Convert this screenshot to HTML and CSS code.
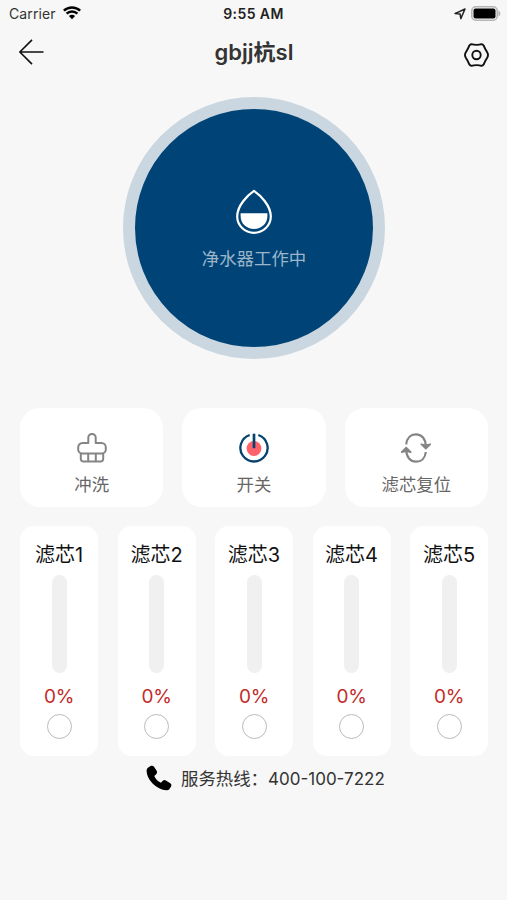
FILE: index.html
```html
<!DOCTYPE html>
<html lang="zh-CN">
<head>
<meta charset="utf-8">
<title>gbjj杭sl</title>
<link rel="stylesheet" href="styles.css">
</head>
<body>
<div class="status">
  <div class="status-left"><span class="carrier">Carrier</span>
    <svg class="wifi" width="18" height="14" viewBox="0 0 18 14"><path d="M.8 4.700C5.400.3 12.600.3 17.200 4.700M3.600 7.700c3-2.900 7.800-2.900 10.800 0" fill="none" stroke="#000" stroke-width="2.500"/><path d="M5.900 10.100c1.700-1.700 4.500-1.700 6.200 0L9 13.300Z"/></svg>
  </div>
  <div class="time">9:55 AM</div>
  <div class="status-right">
    <svg width="12" height="12" viewBox="0 0 12 12"><path d="M1 5.600 11 1 6.800 10.600 6.100 6.100Z" fill="none" stroke="#222" stroke-width="1.500" stroke-linejoin="round"/></svg>
    <svg width="30" height="15" viewBox="0 0 30 15"><rect x=".8" y=".8" width="25.400" height="13.400" rx="4" fill="#f7f7f7" stroke="#b5b5b5" stroke-width="1.600"/><rect x="2.500" y="2.500" width="22" height="10" rx="2"/><path d="M27.400 4.500c2.600 1 2.600 5 0 6Z" fill="#b5b5b5"/></svg>
  </div>
</div>
<header class="nav">
  <svg width="25" height="26" viewBox="0 0 25 26"><path d="M13 .9.9 13 13 25.100M1 13h23.500" fill="none" stroke="#111" stroke-width="1.600"/></svg>
  <h1>gbjj杭sl</h1>
  <svg class="gear" width="25" height="24" viewBox="0 0 25 24" fill="none" stroke="#111" stroke-width="1.900" stroke-linejoin="round"><path d="M7.600 1.200Q9.200 1.900 12.500 1.900T17.400 1.200Q18.800 1.100 19.600 2.400 20.800 5.600 23.300 9.600 24.700 12 23.300 14.400 20.800 18.400 19.600 21.600 18.800 22.900 17.400 22.800 15.800 22.100 12.500 22.100T7.600 22.800Q6.200 22.900 5.400 21.600 4.200 18.400 1.700 14.400.3 12 1.700 9.600 4.200 5.600 5.400 2.400 6.200 1.100 7.600 1.200Z"/><circle cx="12.500" cy="12" r="4.200"/></svg>
</header>
<main>
  <section class="dial">
    <svg width="38" height="46" viewBox="0 0 38 46"><path d="M19 1.900C12.500 6.300 2.200 16.500 2.200 27.600a16.800 16.200 0 0 0 33.600 0C35.800 16.500 25.500 6.300 19 1.900Z" fill="none" stroke="#fff" stroke-width="2.200" stroke-linejoin="round"/><path d="M5.600 24.200H32.400V27C32.400 34.500 26.500 39.900 19 39.900S5.600 34.500 5.600 27Z" fill="#fff"/></svg>
    <p>净水器工作中</p>
  </section>
  <section class="actions">
    <div class="card action">
      <svg width="30" height="30" viewBox="0 0 30 30" fill="none" stroke="#858585" stroke-width="2" stroke-linejoin="round"><path d="M11.300 10V4.600a3.700 3.700 0 0 1 7.400 0V10H24.500a4.300 4.300 0 0 1 4.300 4.300V16.500a4 4 0 0 1-4 4H5.200a4 4 0 0 1-4-4V14.300A4.300 4.300 0 0 1 5.500 10ZM3.800 20.500V26a2.500 2.500 0 0 0 2.500 2.500H23.700a2.500 2.500 0 0 0 2.500-2.500V20.500M11.200 20.500v8M18.800 20.500v8"/></svg>
      <span>冲洗</span>
    </div>
    <div class="card action">
      <svg width="30" height="30" viewBox="0 0 30 30"><circle cx="15" cy="15.500" r="7.400" fill="#ff626a"/><path d="M10.700 2A13.600 13.600 0 1 0 19.300 2" fill="none" stroke="#07426f" stroke-width="2.300"/><path d="M15 .7V15.200" stroke="#07426f" stroke-width="2.700"/></svg>
      <span>开关</span>
    </div>
    <div class="card action">
      <svg width="30" height="30" viewBox="0 0 30 30" fill="none" stroke="#858585" stroke-width="2.200"><path d="M5.200 11.300C5.800 5.300 9.700 1.400 15 1.400c5.800 0 9.700 4.500 9.700 11.600V15M24.800 19C24.200 25 20.300 28.700 15 28.700 9.200 28.700 5.300 24.200 5.300 17.100V15.300"/><path d="M20.200 11.200l4.600 1 4.600-1-4.600 4.400ZM.6 19.100l4.600-4.400 4.600 4.400-4.600-1Z" fill="#858585" stroke-width="1.600" stroke-linejoin="round"/></svg>
      <span>滤芯复位</span>
    </div>
  </section>
  <section class="filters">
    <div class="card filter"><h2>滤芯1</h2><div class="track"></div><strong>0%</strong><i class="dot"></i></div>
    <div class="card filter"><h2>滤芯2</h2><div class="track"></div><strong>0%</strong><i class="dot"></i></div>
    <div class="card filter"><h2>滤芯3</h2><div class="track"></div><strong>0%</strong><i class="dot"></i></div>
    <div class="card filter"><h2>滤芯4</h2><div class="track"></div><strong>0%</strong><i class="dot"></i></div>
    <div class="card filter"><h2>滤芯5</h2><div class="track"></div><strong>0%</strong><i class="dot"></i></div>
  </section>
</main>
<footer class="hotline">
  <svg width="26" height="26" viewBox="0 0 26 26"><path d="M2.200 2.500 5 .8Q6.900.2 8 1.800L10.800 6.100Q11.600 7.800 10.200 9.200L8.300 10.900C9.200 13.500 12 16.500 14.900 17.700L16.800 15.800Q18.200 14.500 19.900 15.500L24.300 18.200Q26 19.400 25.200 21.200L23.500 23.900Q22.500 25.300 20.500 25.200C10.800 24.800.6 15 .6 5.500Q.6 3.600 2.200 2.500Z"/></svg>
  <span class="label">服务热线：</span><span class="phone">400-100-7222</span>
</footer>
</body>
</html>
```
FILE: styles.css
```css
* { box-sizing: border-box; margin: 0; padding: 0; }
body { width: 507px; height: 900px; overflow: hidden; background: #f7f7f7; font-family: Inter, "Noto Sans CJK SC", sans-serif; color: #222; }
svg { display: block; flex: none; }
.status { display: grid; grid-template-columns: 1fr auto 1fr; align-items: center; height: 27px; padding: 0 6px 0 9px; }
.status-left { display: flex; align-items: center; gap: 7px; }
.carrier { font-size: 14px; letter-spacing: .1px; color: #333; }
.wifi { margin-bottom: 2px; }
.time { font-size: 14px; font-weight: 600; letter-spacing: .4px; margin-left: -3px; }
.status-right { display: flex; justify-content: flex-end; align-items: center; gap: 5px; }
.nav { display: flex; align-items: center; justify-content: space-between; height: 49px; padding: 0 18px 0 19px; }
.nav h1 { font-size: 22px; line-height: 30px; font-weight: 600; color: #333; }
.gear { margin-top: 7px; }
main { padding: 21px 19px 0 20px; }
.dial { width: 262px; height: 262px; margin: 0 auto; border: 12px solid #cad7e0; border-radius: 50%; background: #004477; display: flex; flex-direction: column; align-items: center; padding-top: 80px; }
.dial p { margin-top: 11px; font-size: 17.400px; line-height: 26px; color: #9bb5ca; }
.actions { display: grid; grid-template-columns: repeat(3, 1fr); gap: 19px; margin-top: 49px; }
.card { background: #fff; display: flex; flex-direction: column; align-items: center; }
.action { height: 99px; border-radius: 20px; padding-top: 25px; }
.action span { margin-top: 9px; font-size: 17.400px; line-height: 26px; color: #666; }
.filters { display: grid; grid-template-columns: repeat(5, 1fr); gap: 19.500px; margin-top: 19px; }
.filter { height: 230px; border-radius: 14px; padding-top: 15px; }
.filter h2 { font-size: 20px; line-height: 28px; font-weight: 400; color: #111; }
.track { width: 15px; height: 98px; margin-top: 6px; border-radius: 7.500px; background: #f0f0f0; }
.filter strong { margin-top: 11px; font-size: 19px; letter-spacing: -.4px; line-height: 26px; font-weight: 400; color: #c22c2a; }
.dot { width: 25px; height: 25px; margin-top: 4px; border: 1.500px solid #bbb; border-radius: 50%; }
.hotline { display: flex; align-items: center; margin: 9px 0 0 146px; height: 26px; font-size: 17px; color: #333; white-space: nowrap; }
.label { width: 87px; margin: -2px 0 0 9px; font-size: 17.400px; }
.phone { padding-top: 1px; }
```
